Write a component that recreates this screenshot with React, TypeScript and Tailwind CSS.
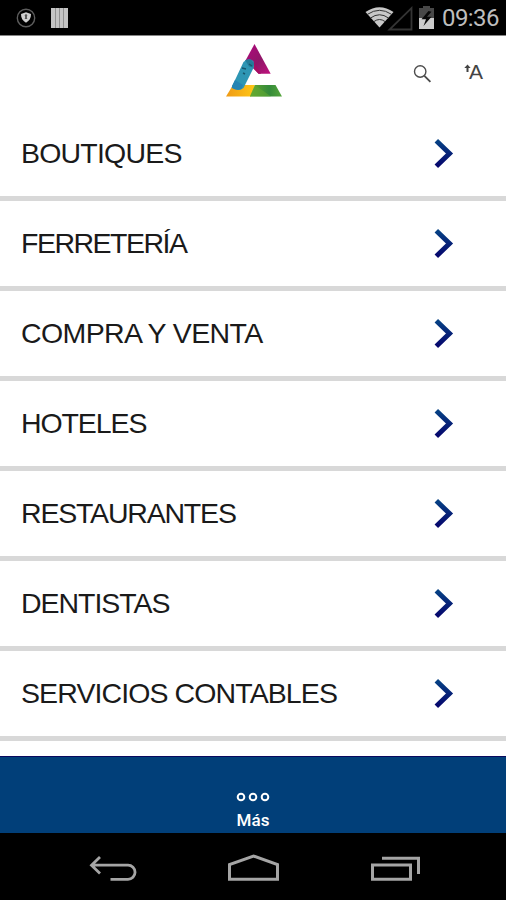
const rows = [
  { label: "BOUTIQUES", tracking: "tracking-[-0.8px]" },
  { label: "FERRETERÍA", tracking: "tracking-[-1.5px]" },
  { label: "COMPRA Y VENTA", tracking: "tracking-[-0.62px]" },
  { label: "HOTELES", tracking: "tracking-[-1.1px]" },
  { label: "RESTAURANTES", tracking: "tracking-[-1.2px]" },
  { label: "DENTISTAS", tracking: "tracking-[-1.05px]" },
  { label: "SERVICIOS CONTABLES", tracking: "tracking-[-0.9px]" },
];

function StatusBar() {
  return (
    <div className="flex h-[35px] shrink-0 items-center bg-black">
      <svg className="ml-[16px] h-[20px] w-[20px]" viewBox="0 0 20 20" fill="none">
        <circle cx="10" cy="10" r="8.700" stroke="#5d5d5d" strokeWidth="1.400" />
        <path d="M10 4.200 15 6c0 4-1.500 6.800-5 8.700C6.500 12.800 5 10 5 6Z" fill="#cfcfcf" />
        <path d="M8.700 7.500a1.300 1.300 0 1 1 2.600 0l-.5 1.500.5 2H8.700l.5-2Z" fill="#555" />
      </svg>
      <svg className="ml-[14px] h-[22px] w-[19px]" viewBox="0 0 19 22">
        <path d="M1 1h17v20H1Z" fill="#c4c4c4" />
        <path d="M5.500 1v20M9.500 1v20M13.500 1v20" stroke="#909090" />
      </svg>
      <svg className="ml-auto h-[35px] w-[75px]" viewBox="0 0 75 35" fill="none">
        <path d="M.5 12Q14.500 2.500 28.500 12L14.500 27.500Z" fill="#c8c8c8" />
        <path d="M2.500 14.300Q14.500 6.300 26.500 14.300M5.500 18Q14.500 11.500 23.500 18M9 21.500Q14.500 17.500 20 21.500" stroke="#333" strokeWidth="1" />
        <path d="M24.500 29.500H46.500V8.200Z" stroke="#343434" strokeWidth="1.800" />
        <path d="M54 8h4V6h7v2h4v21H54Z" fill="#484848" />
        <path d="M54 18h15v11H54Z" fill="#cbcbcb" />
        <path d="m63.500 11-7 8.200h4.500L58.500 26l8-9.300H62l4.500-5" fill="#080808" />
      </svg>
      <span className="ml-[1px] w-[65px] whitespace-nowrap pl-[1px] font-[Roboto,sans-serif] text-[24px] leading-[30px] tracking-[-0.6px] text-[#bdbdbd]">09:36</span>
    </div>
  );
}

function Logo() {
  return (
    <svg className="ml-[2px] h-[56px] w-[60px]" viewBox="0 0 60 56">
      <defs>
        <linearGradient id="pink" x1="0" x2="1" y1="0" y2="1">
          <stop stopColor="#b3087e" />
          <stop offset=".55" stopColor="#8f1668" />
          <stop offset="1" stopColor="#c1127e" />
        </linearGradient>
        <linearGradient id="gold" x1="0" x2="1">
          <stop stopColor="#ef9a16" />
          <stop offset="1" stopColor="#ffc715" />
        </linearGradient>
        <linearGradient id="green" x1="0" x2="1">
          <stop stopColor="#66a72e" />
          <stop offset=".6" stopColor="#348b3a" />
          <stop offset="1" stopColor="#55a53b" />
        </linearGradient>
      </defs>
      <path d="M29.500 1 45.700 30.800H33.500L20.500 17.500Z" fill="url(#pink)" />
      <path d="m29 20 7 10.800h-2.500l-6-7Z" fill="#a90c63" />
      <path d="M8 42H30L26 53.500H1Z" fill="url(#gold)" />
      <path d="M30 42H50.500L57 53.500H25Z" fill="url(#green)" />
      <path d="M25 53.500 30 42 46 53.500Z" fill="#64ac32" opacity=".55" />
      <path d="M18.500 19Q23 14 28.500 18L29 24 18.500 45Q13 49 6.500 44.500Z" fill="#2e96b4" />
      <path d="m20 17 6-.5 3 4-1 4-4-1Z" fill="#237c99" />
      <path d="m7 43 3-6 8 5-1.500 4Q12 48 7 45Z" fill="#2584b3" />
      <path d="m17 25 4 1M24 21l3 2M20 31l-2-1" stroke="#17566d" strokeWidth="1.500" />
    </svg>
  );
}

function Header() {
  return (
    <header className="grid h-[75px] shrink-0 grid-cols-[1fr_60px_1fr] bg-white pt-[7px]">
      <div />
      <Logo />
      <div className="flex pl-[130px] pt-[20px]">
        <svg className="h-[22px] w-[22px]" viewBox="0 0 22 22" fill="none" stroke="#4c4c4c">
          <circle cx="7.200" cy="8.500" r="5.700" strokeWidth="1.400" />
          <path d="m11.400 12.800 6 6" strokeWidth="1.900" />
        </svg>
        <div className="ml-[29px] flex text-[#444]">
          <svg className="mt-px h-[10px] w-[7px]" viewBox="0 0 7 10">
            <path d="M3.500.5 6.700 4H4.500v4h-2V4H.3Z" fill="currentColor" />
          </svg>
          <span className="-ml-[2px] -mt-px font-['Liberation_Sans',sans-serif] text-[21px] leading-[20px]">A</span>
        </div>
      </div>
    </header>
  );
}

function CategoryList() {
  return (
    <ul className="shrink-0">
      {rows.map((row) => (
        <li key={row.label} className="flex h-[90px] items-center justify-between border-b-[5px] border-[#d8d8d8] bg-white pl-[21px] pr-[52px]">
          <span className={`whitespace-nowrap pb-[2px] font-['Liberation_Sans',sans-serif] text-[28.500px] leading-[34px] text-[#1a1a1a] ${row.tracking}`}>{row.label}</span>
          <svg className="h-[30px] w-[20px]" viewBox="0 0 20 30" fill="none">
            <defs>
              <linearGradient id="chevron" x1="0" x2="0" y1="0" y2="1">
                <stop stopColor="#064184" />
                <stop offset="1" stopColor="#06066d" />
              </linearGradient>
            </defs>
            <path d="M2.300 1.800 15.500 14.500 2.300 27.200" stroke="url(#chevron)" strokeWidth="5" />
          </svg>
        </li>
      ))}
    </ul>
  );
}

export default function App() {
  return (
    <main className="flex h-[900px] w-[506px] flex-col overflow-hidden bg-white">
      <StatusBar />
      <div className="h-px shrink-0 bg-[#858585]" />
      <Header />
      <CategoryList />
      <div className="h-[15px] shrink-0 bg-white" />
      <footer className="flex h-[77px] shrink-0 flex-col items-center border-t border-[#09095e] bg-[#013f79] pt-[35px] text-white">
        <svg className="h-[10px] w-[34px]" viewBox="0 0 34 10" fill="none" stroke="currentColor" strokeWidth="2">
          <circle cx="5" cy="5" r="3.300" />
          <circle cx="17" cy="5" r="3.300" />
          <circle cx="29" cy="5" r="3.300" />
        </svg>
        <span className="mt-[8px] font-[Roboto,sans-serif] text-[17px] font-medium leading-[20px]">Más</span>
      </footer>
      <nav className="flex flex-1 items-start bg-black pt-[18px] text-[#a5a5a5]">
        <svg className="ml-[88px] h-[34px] w-[50px]" viewBox="0 0 50 34" fill="none" stroke="currentColor" strokeWidth="2.800">
          <path d="M3 14.200H40a7 7 0 0 1 0 14.100H22.500M12 6 3.500 14.200 12 22.500" />
        </svg>
        <svg className="ml-[88px] h-[34px] w-[56px]" viewBox="0 0 56 34" fill="none" stroke="currentColor" strokeWidth="3">
          <path d="M3.500 28.300V13.500L27.500 5l24 8.500v14.800Z" />
        </svg>
        <svg className="ml-[87px] h-[34px] w-[54px]" viewBox="0 0 54 34" fill="none" stroke="currentColor" strokeWidth="3">
          <path d="M3.500 14H41.500V28.300H3.500ZM13 7.300H49.500V23" />
        </svg>
      </nav>
    </main>
  );
}
